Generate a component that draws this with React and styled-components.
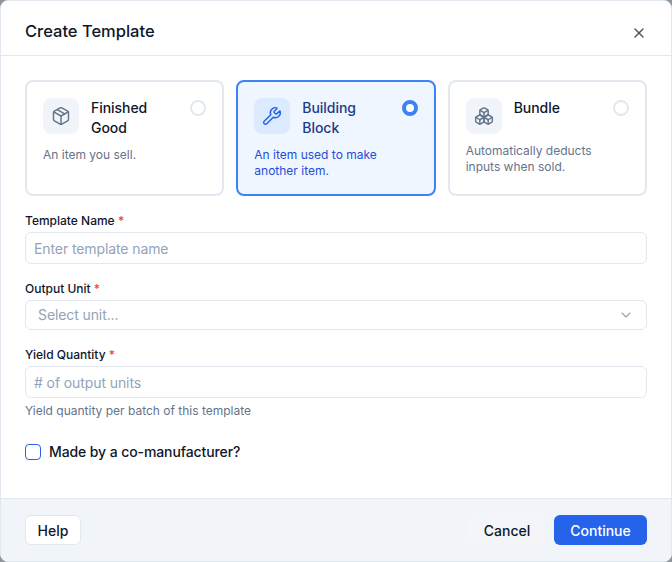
import React, { useState } from "react";
import styled, { createGlobalStyle } from "styled-components";
import { Package, Wrench, Boxes, X, ChevronDown } from "lucide-react";

const templateTypes = [
  { id: "finished", title: "Finished Good", text: "An item you sell.", Icon: Package },
  { id: "block", title: "Building Block", text: "An item used to make another item.", Icon: Wrench },
  { id: "bundle", title: "Bundle", text: "Automatically deducts inputs when sold.", Icon: Boxes },
];

const App = () => {
  const [selected, setSelected] = useState("block");

  return (
    <>
      <GlobalStyle />
      <Dialog>
        <Header>
          <Title>Create Template</Title>
          <CloseButton aria-label="Close">
            <X size={16} strokeWidth={2} />
          </CloseButton>
        </Header>
        <Body>
          <CardGrid>
            {templateTypes.map(({ id, title, text, Icon }) => (
              <Card key={id} $active={selected === id} onClick={() => setSelected(id)}>
                <CardTop>
                  <IconTile $active={selected === id}>
                    <Icon size={20} strokeWidth={1.75} />
                  </IconTile>
                  <CardTitle $active={selected === id}>{title}</CardTitle>
                  <Radio $active={selected === id} />
                </CardTop>
                <CardText $active={selected === id}>{text}</CardText>
              </Card>
            ))}
          </CardGrid>

          <Field>
            <Label>
              Template Name <Star>*</Star>
            </Label>
            <Input placeholder="Enter template name" />
          </Field>

          <Field>
            <Label>
              Output Unit <Star>*</Star>
            </Label>
            <Select>
              <SelectText>Select unit...</SelectText>
              <ChevronDown size={16} strokeWidth={1.75} color="#94a3b8" />
            </Select>
          </Field>

          <Field>
            <Label>
              Yield Quantity <Star>*</Star>
            </Label>
            <Input placeholder="# of output units" />
            <Help>Yield quantity per batch of this template</Help>
          </Field>

          <CheckRow>
            <CheckBox type="button" aria-label="Made by a co-manufacturer?" />
            <CheckLabel>Made by a co-manufacturer?</CheckLabel>
          </CheckRow>
        </Body>
        <Footer>
          <HelpButton>Help</HelpButton>
          <FooterRight>
            <CancelButton>Cancel</CancelButton>
            <ContinueButton>Continue</ContinueButton>
          </FooterRight>
        </Footer>
      </Dialog>
    </>
  );
};

const GlobalStyle = createGlobalStyle`
  html, body {
    margin: 0;
    padding: 0;
    background: #8f949b;
  }
  body {
    font-family: Inter, "Liberation Sans", sans-serif;
    color: #0f172a;
  }
  * {
    box-sizing: border-box;
  }
`;

const Dialog = styled.div`
  width: 672px;
  height: 562px;
  display: flex;
  flex-direction: column;
  background: #fff;
  border: 1px solid #e2e8f0;
  border-radius: 8px;
  overflow: hidden;
`;

const Header = styled.div`
  height: 55px;
  flex-shrink: 0;
  display: flex;
  align-items: center;
  justify-content: space-between;
  padding: 0 24px;
  border-bottom: 1px solid #e2e8f0;
`;

const Title = styled.h2`
  margin: 6px 0 0;
  font-size: 16.5px;
  line-height: 28px;
  font-weight: 500;
  color: #0f172a;
`;

const CloseButton = styled.button`
  display: flex;
  padding: 0;
  margin: 10px 0 0;
  border: none;
  background: none;
  color: #475569;
  cursor: pointer;
`;

const Body = styled.div`
  flex: 1;
  padding: 24px 24px 0;
`;

const CardGrid = styled.div`
  display: grid;
  grid-template-columns: repeat(3, 1fr);
  gap: 12px;
`;

const Card = styled.div`
  height: 116px;
  padding: 16px;
  border: 2px solid ${({ $active }) => ($active ? "#3b82f6" : "#e2e8f0")};
  border-radius: 8px;
  background: ${({ $active }) => ($active ? "#eff6ff" : "#fff")};
  cursor: pointer;
`;

const CardTop = styled.div`
  display: flex;
  align-items: flex-start;
  gap: 12px;
  margin-bottom: 9px;
`;

const IconTile = styled.div`
  width: 36px;
  height: 36px;
  flex-shrink: 0;
  display: flex;
  align-items: center;
  justify-content: center;
  border-radius: 8px;
  background: ${({ $active }) => ($active ? "#dbeafe" : "#f1f5f9")};
  color: ${({ $active }) => ($active ? "#2563eb" : "#64748b")};
`;

const CardTitle = styled.div`
  flex: 1;
  font-size: 14px;
  line-height: 20px;
  font-weight: 500;
  letter-spacing: -0.05px;
  color: ${({ $active }) => ($active ? "#1e3a8a" : "#0f172a")};
`;

const Radio = styled.span`
  width: 16px;
  height: 16px;
  flex-shrink: 0;
  margin-top: 2px;
  border-radius: 50%;
  border: ${({ $active }) => ($active ? "4px solid #3b82f6" : "2px solid #e2e8f0")};
  background: #fff;
`;

const CardText = styled.p`
  margin: 0;
  font-size: 12px;
  line-height: 16px;
  color: ${({ $active }) => ($active ? "#1d4ed8" : "#64748b")};
`;

const Field = styled.div`
  margin-top: 16px;
`;

const Label = styled.label`
  display: block;
  margin-bottom: 2px;
  font-size: 12px;
  line-height: 18px;
  font-weight: 500;
  color: #0f172a;
`;

const Star = styled.span`
  color: #ef4444;
`;

const Input = styled.input`
  display: block;
  width: 100%;
  height: 32px;
  padding: 0 8px;
  border: 1px solid #e2e8f0;
  border-radius: 6px;
  background: #fff;
  font-family: inherit;
  font-size: 14px;
  letter-spacing: -0.1px;
  color: #0f172a;
  outline: none;

  &::placeholder {
    color: #94a3b8;
  }
`;

const Select = styled.div`
  height: 30px;
  display: flex;
  align-items: center;
  justify-content: space-between;
  padding: 0 12px;
  border: 1px solid #e2e8f0;
  border-radius: 6px;
  background: #fff;
`;

const SelectText = styled.span`
  margin-bottom: 2px;
  font-size: 14px;
  letter-spacing: -0.1px;
  color: #94a3b8;
`;

const Help = styled.p`
  margin: 4px 0 0;
  font-size: 12px;
  line-height: 18px;
  color: #64748b;
`;

const CheckRow = styled.div`
  display: flex;
  align-items: center;
  gap: 8px;
  margin-top: 24px;
`;

const CheckBox = styled.button`
  width: 16px;
  height: 16px;
  padding: 0;
  border: 1px solid #2563eb;
  border-radius: 4px;
  background: #fff;
`;

const CheckLabel = styled.span`
  font-size: 14px;
  line-height: 16px;
  font-weight: 500;
  letter-spacing: -0.1px;
  color: #0f172a;
`;

const Footer = styled.div`
  height: 63px;
  flex-shrink: 0;
  display: flex;
  align-items: center;
  justify-content: space-between;
  padding: 0 24px;
  background: #f1f5f9;
  border-top: 1px solid #e2e8f0;
`;

const FooterRight = styled.div`
  display: flex;
  gap: 8px;
`;

const BaseButton = styled.button`
  height: 30px;
  border-radius: 6px;
  font-family: inherit;
  font-size: 14px;
  font-weight: 500;
  cursor: pointer;
`;

const HelpButton = styled(BaseButton)`
  width: 56px;
  border: 1px solid #e2e8f0;
  background: #fff;
  color: #0f172a;
`;

const CancelButton = styled(BaseButton)`
  width: 78px;
  border: none;
  background: #f3f5f9;
  color: #0f172a;
`;

const ContinueButton = styled(BaseButton)`
  width: 93px;
  border: none;
  background: #2563eb;
  color: #fff;
`;

export default App;
